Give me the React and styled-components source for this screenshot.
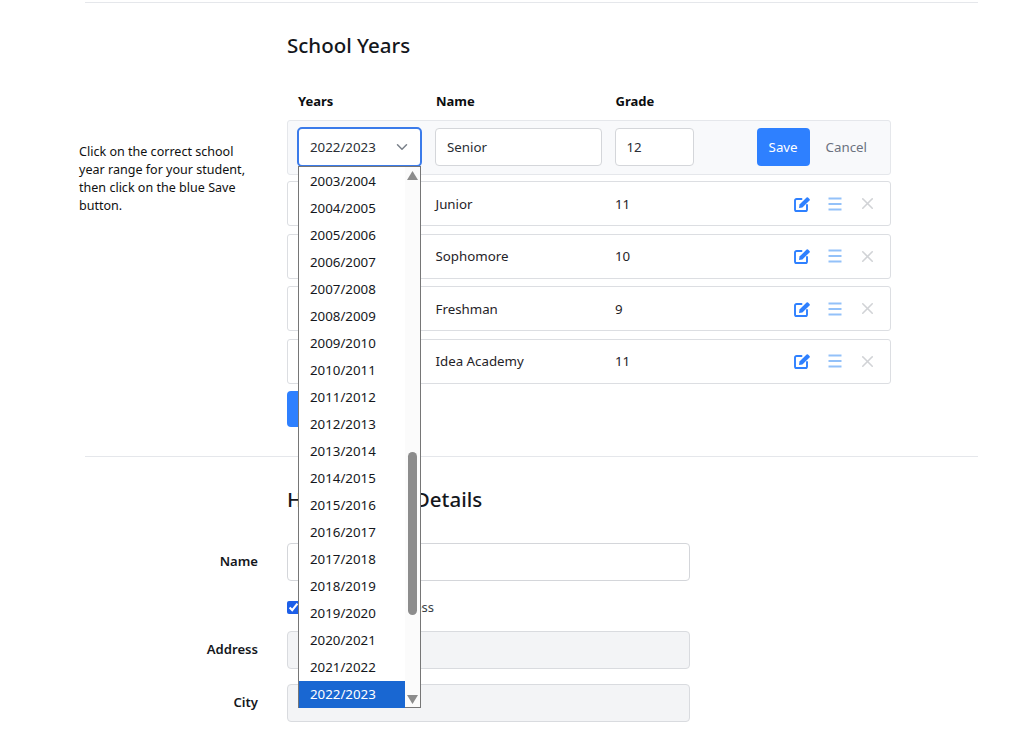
import React from "react";
import styled, { createGlobalStyle } from "styled-components";
import { FiX, FiChevronDown } from "react-icons/fi";

const GlobalStyle = createGlobalStyle`
  html, body {
    margin: 0;
    height: 731px;
    overflow: hidden;
    background: #fff;
  }
  body {
    font-family: "Noto Sans", "Open Sans", sans-serif;
    color: #14171c;
    font-size: 13.3px;
  }
`;

const Page = styled.div`
  width: 1022px;
  padding-top: 2px;
  box-sizing: border-box;
`;

const Rule = styled.hr`
  margin: 0 44px 0 85px;
  border: 0;
  border-top: 1px solid #e5e7eb;
`;

const Section = styled.section`
  display: grid;
  grid-template-columns: 208px 604px;
  padding-left: 79px;
`;

const Note = styled.p`
  margin: 0;
  padding-top: 140px;
  width: 172px;
  font-size: 12.55px;
  line-height: 18px;
  color: #111;
`;

const Heading = styled.h2`
  margin: 27px 0 0;
  font-size: 20.5px;
  line-height: 30px;
  font-weight: 500;
  color: #14171c;
`;

const Columns = styled.div`
  display: grid;
  grid-template-columns: 125px 166.5px 79px 1fr;
  column-gap: 13px;
`;

const HeaderRow = styled(Columns)`
  margin-top: 31px;
  padding-left: 11px;
  font-weight: 700;
  font-size: 13px;
  line-height: 20px;
  color: #0b0d10;
`;

const EditRow = styled(Columns)`
  margin-top: 9px;
  height: 54.5px;
  box-sizing: border-box;
  padding: 7px 23px 0 9px;
  align-items: start;
  background: #f8f9fb;
  border: 1px solid #e5e7eb;
  border-radius: 3px;
`;

const Input = styled.input`
  display: block;
  height: 38px;
  width: 100%;
  box-sizing: border-box;
  padding: 0 11px;
  border: 1px solid ${(p) => (p.$muted ? "#d9dbdf" : "#d4d6da")};
  border-radius: 4px;
  background: ${(p) => (p.$muted ? "#f3f4f6" : "#fff")};
  color: #2a2e34;
  font: inherit;
  outline: none;
`;

const SelectCell = styled.div`
  position: relative;
  margin-top: -1px;
`;

const SelectBox = styled.div`
  height: 40px;
  box-sizing: border-box;
  display: flex;
  align-items: center;
  justify-content: space-between;
  padding: 0 9px 0 11px;
  border: 2px solid #3b7bea;
  border-radius: 5px;
  background: #fff;
  color: #2a2e34;
  svg {
    color: #7a808a;
    font-size: 18px;
  }
`;

const Dropdown = styled.div`
  position: absolute;
  top: 39px;
  left: 1px;
  z-index: 5;
  width: 123px;
  height: 542px;
  box-sizing: border-box;
  display: flex;
  border: 1px solid #767676;
  background: #fff;
`;

const OptionList = styled.ul`
  list-style: none;
  margin: 0;
  padding: 1px 0 0;
  flex: 1;
`;

const Option = styled.li`
  height: 27px;
  line-height: 27px;
  padding-left: 11px;
  color: ${(p) => (p.$selected ? "#fff" : "#14171c")};
  background: ${(p) => (p.$selected ? "#1967d2" : "transparent")};
`;

const ScrollTrack = styled.div`
  position: relative;
  width: 15px;
  background: #fbfbfb;
`;

const ScrollThumb = styled.div`
  position: absolute;
  left: 3px;
  top: 285px;
  width: 9px;
  height: 163px;
  border-radius: 5px;
  background: #8c8c8c;
`;

const ScrollArrow = styled.svg`
  position: absolute;
  left: 2px;
  width: 11px;
  height: 9px;
  fill: #8c8c8c;
  ${(p) => (p.$down ? "bottom: 3px;" : "top: 4px;")}
`;

const Actions = styled.div`
  display: flex;
  justify-content: flex-end;
  align-items: center;
  height: 38px;
  gap: 16px;
`;

const SaveButton = styled.button`
  height: 38px;
  width: 53px;
  padding: 0;
  border: 0;
  border-radius: 4px;
  background: #2e80ff;
  color: #fff;
  font: inherit;
`;

const CancelButton = styled.button`
  padding: 0;
  border: 0;
  background: none;
  color: #6b7280;
  font: inherit;
`;

const RowList = styled.div`
  margin-top: 6.5px;
  display: flex;
  flex-direction: column;
  gap: 7.5px;
`;

const YearRow = styled(Columns)`
  height: 45px;
  box-sizing: border-box;
  padding: 0 16px 0 9.5px;
  align-items: center;
  border: 1px solid #dcdee2;
  border-radius: 3px;
  color: #1f2328;
`;

const IconGroup = styled.div`
  display: flex;
  justify-content: flex-end;
  align-items: center;
  gap: 19px;
`;

const EditIcon = styled.svg`
  width: 16px;
  height: 16px;
  margin-right: -1px;
  path:first-child {
    fill: none;
    stroke: #2e80ff;
    stroke-width: 1.9;
    stroke-linecap: round;
  }
  path:last-child {
    fill: #2e80ff;
  }
`;

const BarsIcon = styled.svg`
  width: 14px;
  height: 14px;
  stroke: #93c1f9;
  stroke-width: 1.8;
`;

const CloseIcon = styled(FiX)`
  color: #d1d3d6;
  font-size: 19px;
  margin: 0 -3px 0 -3px;
`;

const AddButton = styled.button`
  display: block;
  margin-top: 7.5px;
  width: 110px;
  height: 36px;
  border: 0;
  border-radius: 4px;
  background: #2e80ff;
`;

const SecondRule = styled(Rule)`
  margin-top: 29px;
`;

const FormSection = styled.section`
  padding-left: 85px;
  display: grid;
  grid-template-columns: 173px 403px;
  column-gap: 29px;
  align-items: center;
`;

const FormHeading = styled(Heading)`
  grid-column: 2;
  margin: 27px 0 29px;
`;

const FieldLabel = styled.label`
  grid-column: 1;
  margin-top: -2px;
  text-align: right;
  font-weight: 600;
  font-size: 13.1px;
  color: #14171c;
`;

const FieldCell = styled.div`
  grid-column: 2;
`;

const CheckRow = styled.div`
  grid-column: 2;
  display: flex;
  align-items: center;
  gap: 9px;
  height: 14px;
  margin: 19px 0 17px;
  font-size: 13px;
  color: #3a3f46;
`;

const CheckMark = styled.input`
  width: 13px;
  height: 13px;
  margin: 0;
  accent-color: #1d5fe8;
`;

const FormGap = styled.div`
  grid-column: 1 / -1;
  height: 15px;
`;

const years = [];
for (let y = 2003; y <= 2022; y++) years.push(`${y}/${y + 1}`);

const rows = [
  { name: "Junior", grade: "11" },
  { name: "Sophomore", grade: "10" },
  { name: "Freshman", grade: "9" },
  { name: "Idea Academy", grade: "11" },
];

export default function App() {
  return (
    <Page>
      <GlobalStyle />
      <Rule />
      <Section>
        <Note>
          Click on the correct school year range for your student, then click on
          the blue Save button.
        </Note>
        <div>
          <Heading>School Years</Heading>
          <HeaderRow>
            <span>Years</span>
            <span>Name</span>
            <span>Grade</span>
          </HeaderRow>
          <EditRow>
            <SelectCell>
              <SelectBox>
                2022/2023
                <FiChevronDown />
              </SelectBox>
              <Dropdown>
                <OptionList>
                  {years.map((y) => (
                    <Option key={y} $selected={y === "2022/2023"}>
                      {y}
                    </Option>
                  ))}
                </OptionList>
                <ScrollTrack>
                  <ScrollArrow viewBox="0 0 11 9">
                    <path d="M5.5 0 L11 9 L0 9 Z" />
                  </ScrollArrow>
                  <ScrollThumb />
                  <ScrollArrow $down viewBox="0 0 11 9">
                    <path d="M0 0 L11 0 L5.5 9 Z" />
                  </ScrollArrow>
                </ScrollTrack>
              </Dropdown>
            </SelectCell>
            <Input defaultValue="Senior" />
            <Input defaultValue="12" />
            <Actions>
              <SaveButton>Save</SaveButton>
              <CancelButton>Cancel</CancelButton>
            </Actions>
          </EditRow>
          <RowList>
            {rows.map((r) => (
              <YearRow key={r.name}>
                <span />
                <span>{r.name}</span>
                <span>{r.grade}</span>
                <IconGroup>
                  <EditIcon viewBox="0 0 16 16">
                    <path d="M7.5 3H2.6A1.6 1.6 0 0 0 1 4.6v8.8A1.6 1.6 0 0 0 2.6 15h8.8a1.6 1.6 0 0 0 1.6-1.6V9" />
                    <path d="M5.5 8.6 12.6 1.5a1 1 0 0 1 1.4 0l1.5 1.5a1 1 0 0 1 0 1.4L8.4 11.5 5 12Z" />
                  </EditIcon>
                  <BarsIcon viewBox="0 0 14 14">
                    <path d="M0.5 1.5h13M0.5 7h13M0.5 12.5h13" />
                  </BarsIcon>
                  <CloseIcon />
                </IconGroup>
              </YearRow>
            ))}
          </RowList>
          <AddButton aria-label="Add" />
        </div>
      </Section>
      <SecondRule />
      <FormSection>
        <FormHeading>Homeschool Details</FormHeading>
        <FieldLabel>Name</FieldLabel>
        <FieldCell>
          <Input />
        </FieldCell>
        <CheckRow>
          <CheckMark type="checkbox" defaultChecked />
          Use student address
        </CheckRow>
        <FieldLabel>Address</FieldLabel>
        <FieldCell>
          <Input $muted />
        </FieldCell>
        <FormGap />
        <FieldLabel>City</FieldLabel>
        <FieldCell>
          <Input $muted />
        </FieldCell>
      </FormSection>
    </Page>
  );
}
